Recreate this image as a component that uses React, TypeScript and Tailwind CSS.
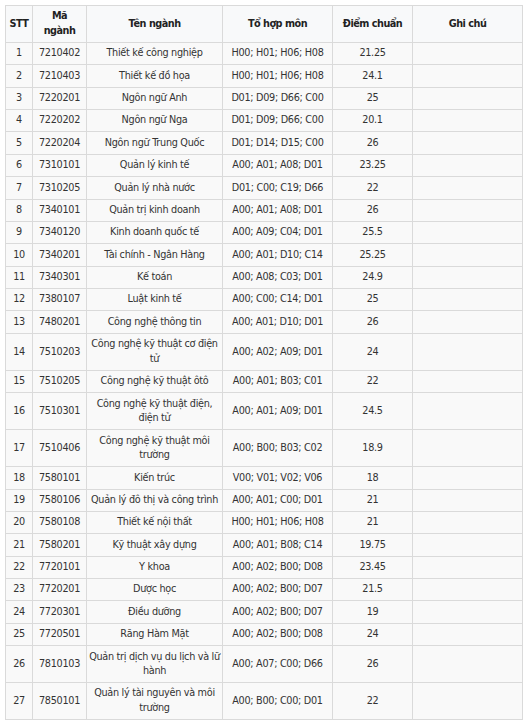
import React from "react";

const rows: [string, string, string, string, string][] = [
  ["1", "7210402", "Thiết kế công nghiệp", "H00; H01; H06; H08", "21.25"],
  ["2", "7210403", "Thiết kế đồ họa", "H00; H01; H06; H08", "24.1"],
  ["3", "7220201", "Ngôn ngữ Anh", "D01; D09; D66; C00", "25"],
  ["4", "7220202", "Ngôn ngữ Nga", "D01; D09; D66; C00", "20.1"],
  ["5", "7220204", "Ngôn ngữ Trung Quốc", "D01; D14; D15; C00", "26"],
  ["6", "7310101", "Quản lý kinh tế", "A00; A01; A08; D01", "23.25"],
  ["7", "7310205", "Quản lý nhà nước", "D01; C00; C19; D66", "22"],
  ["8", "7340101", "Quản trị kinh doanh", "A00; A01; A08; D01", "26"],
  ["9", "7340120", "Kinh doanh quốc tế", "A00; A09; C04; D01", "25.5"],
  ["10", "7340201", "Tài chính - Ngân Hàng", "A00; A01; D10; C14", "25.25"],
  ["11", "7340301", "Kế toán", "A00; A08; C03; D01", "24.9"],
  ["12", "7380107", "Luật kinh tế", "A00; C00; C14; D01", "25"],
  ["13", "7480201", "Công nghệ thông tin", "A00; A01; D10; D01", "26"],
  ["14", "7510203", "Công nghệ kỹ thuật cơ điện tử", "A00; A02; A09; D01", "24"],
  ["15", "7510205", "Công nghệ kỹ thuật ôtô", "A00; A01; B03; C01", "22"],
  ["16", "7510301", "Công nghệ kỹ thuật điện, điện tử", "A00; A01; A09; D01", "24.5"],
  ["17", "7510406", "Công nghệ kỹ thuật môi trường", "A00; B00; B03; C02", "18.9"],
  ["18", "7580101", "Kiến trúc", "V00; V01; V02; V06", "18"],
  ["19", "7580106", "Quản lý đô thị và công trình", "A00; A01; C00; D01", "21"],
  ["20", "7580108", "Thiết kế nội thất", "H00; H01; H06; H08", "21"],
  ["21", "7580201", "Kỹ thuật xây dựng", "A00; A01; B08; C14", "19.75"],
  ["22", "7720101", "Y khoa", "A00; A02; B00; D08", "23.45"],
  ["23", "7720201", "Dược học", "A00; A02; B00; D07", "21.5"],
  ["24", "7720301", "Điều dưỡng", "A00; A02; B00; D07", "19"],
  ["25", "7720501", "Răng Hàm Mặt", "A00; A02; B00; D08", "24"],
  ["26", "7810103", "Quản trị dịch vụ du lịch và lữ hành", "A00; A07; C00; D66", "26"],
  ["27", "7850101", "Quản lý tài nguyên và môi trường", "A00; B00; C00; D01", "22"],
];

const cell =
  "border border-[#dadada] px-[2px] py-[3.4px] text-center align-middle leading-[14.6px]";

export default function App() {
  return (
    <div className="bg-white min-h-screen p-[5px] text-[#333]" style={{ fontFamily: '"DejaVu Sans", Verdana, sans-serif' }}>
      <table className="table-fixed border-collapse text-[9.7px] tracking-[-0.3px] w-[517px] bg-[#f9f9f9]">
        <colgroup>
          <col className="w-[27px]" />
          <col className="w-[54px]" />
          <col className="w-[136px]" />
          <col className="w-[110px]" />
          <col className="w-[80px]" />
          <col className="w-[110px]" />
        </colgroup>
        <thead>
          <tr className="bg-[#f8f9fa] font-bold text-[#222]">
            <th className={`${cell} tracking-[-0.5px]`}>STT</th>
            <th className={`${cell} tracking-[-0.5px]`}>Mã ngành</th>
            <th className={`${cell} tracking-[-0.5px]`}>Tên ngành</th>
            <th className={`${cell} tracking-[-0.5px]`}>Tổ hợp môn</th>
            <th className={`${cell} tracking-[-0.5px]`}>Điểm chuẩn</th>
            <th className={`${cell} tracking-[-0.5px]`}>Ghi chú</th>
          </tr>
        </thead>
        <tbody>
          {rows.map((r) => (
            <tr key={r[0]}>
              <td className={cell}>{r[0]}</td>
              <td className={cell}>{r[1]}</td>
              <td className={cell}>{r[2]}</td>
              <td className={cell}>{r[3]}</td>
              <td className={cell}>{r[4]}</td>
              <td className={cell}></td>
            </tr>
          ))}
        </tbody>
      </table>
    </div>
  );
}
